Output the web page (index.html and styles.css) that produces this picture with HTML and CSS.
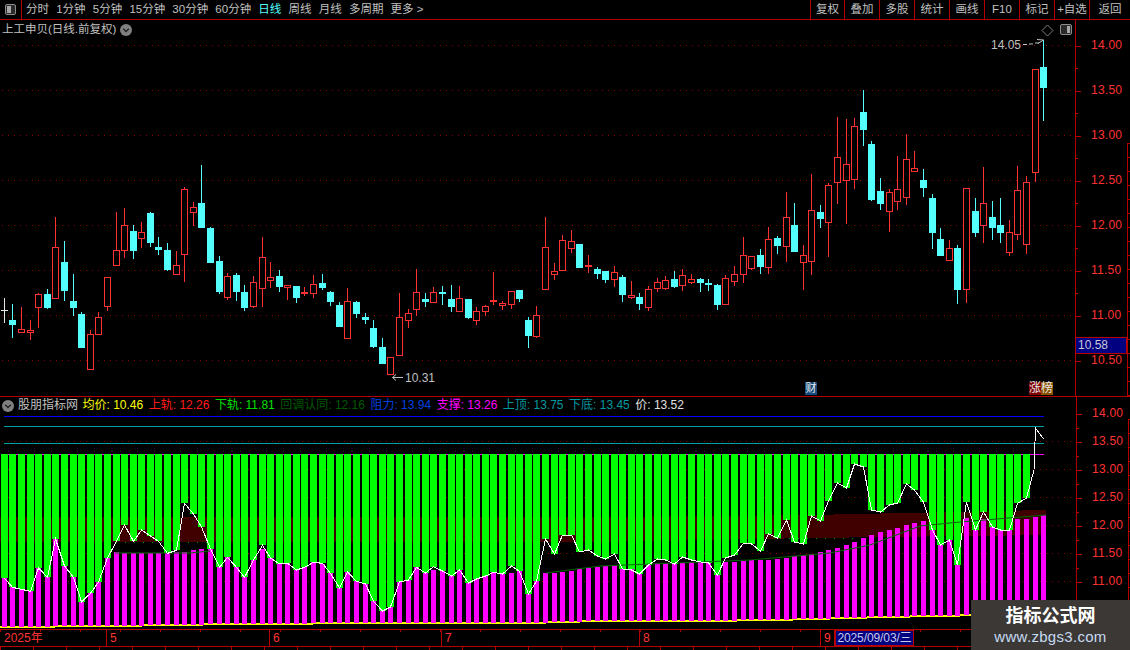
FILE: index.html
```html
<!DOCTYPE html>
<html lang="zh">
<head>
<meta charset="utf-8">
<title>上工申贝</title>
<link rel="stylesheet" href="styles.css">
</head>
<body>
<div class="app">
  <header class="toolbar">
    <div class="toolbar-toggle">
      <svg class="split-icon" width="11" height="11" viewBox="0 0 11 11"><rect x="0.5" y="0.5" width="10" height="10" rx="1.5" class="split-frame"/><rect x="2" y="2" width="4" height="7" class="split-fill"/></svg>
    </div>
    <nav class="periods">
      <span>分时</span><span>1分钟</span><span>5分钟</span><span>15分钟</span><span>30分钟</span><span>60分钟</span><span class="active">日线</span><span>周线</span><span>月线</span><span>多周期</span><span>更多 &gt;</span>
    </nav>
    <nav class="actions">
      <span>复权</span><span>叠加</span><span>多股</span><span>统计</span><span>画线</span><span>F10</span><span>标记</span><span>+自选</span><span>返回</span>
    </nav>
  </header>

  <section class="pane pane-main">
    <div class="plot">
      <svg id="candles" class="plot-svg" width="1075" height="376" viewBox="0 20 1075 376"></svg>
      <div class="plot-title">
        <span>上工申贝(日线.前复权)</span>
        <svg class="chevron" width="12" height="12" viewBox="0 0 12 12"><circle cx="6" cy="6" r="6"/><path d="M3.2 4.8 6 7.6 8.8 4.8"/></svg>
      </div>
      <svg class="mark-diamond" width="13" height="13" viewBox="0 0 13 13"><path d="M6.5 1 12 6.5 6.5 12 1 6.5Z"/></svg>
      <svg class="mark-split" width="12" height="11" viewBox="0 0 12 11"><rect x="0.5" y="0.5" width="11" height="10" rx="1.5" class="split-frame"/><rect x="7" y="2" width="3" height="7" class="split-fill"/></svg>
      <div class="price-note note-high">14.05</div>
      <div class="price-note note-low">10.31</div>
      <div class="badge badge-cai">财</div>
      <div class="badge-pair"><span class="bp-red">涨</span><span class="bp-brown">榜</span></div>
    </div>
    <aside class="axis axis-main">
      <div class="axis-labels">
        <div class="tick">14.00</div><div class="tick">13.50</div><div class="tick">13.00</div><div class="tick">12.50</div><div class="tick">12.00</div><div class="tick">11.50</div><div class="tick">11.00</div><div class="tick">10.50</div>
      </div>
      <div class="axis-edge edge-main"></div>
      <div class="last-price">10.58</div>
    </aside>
  </section>

  <section class="pane pane-sub">
    <div class="plot">
      <svg id="bars" class="plot-svg" width="1076" height="232" viewBox="0 397 1076 232"></svg>
      <div class="legend">
        <svg class="chevron" width="12" height="12" viewBox="0 0 12 12"><circle cx="6" cy="6" r="6"/><path d="M3.2 4.8 6 7.6 8.8 4.8"/></svg>
        <span class="legend-name">股朋指标网</span>
        <span class="c-yellow">均价: 10.46</span>
        <span class="c-red">上轨: 12.26</span>
        <span class="c-green">下轨: 11.81</span>
        <span class="c-dkgreen">回调认同: 12.16</span>
        <span class="c-blue">阻力: 13.94</span>
        <span class="c-magenta">支撑: 13.26</span>
        <span class="c-teal">上顶: 13.75</span>
        <span class="c-teal">下底: 13.45</span>
        <span class="c-white">价: 13.52</span>
      </div>
    </div>
    <aside class="axis axis-sub">
      <div class="axis-labels">
        <div class="tick">14.00</div><div class="tick">13.50</div><div class="tick">13.00</div><div class="tick">12.50</div><div class="tick">12.00</div><div class="tick">11.50</div><div class="tick">11.00</div>
      </div>
      <div class="axis-edge edge-sub"></div>
    </aside>
  </section>

  <footer class="timeline">
    <div class="months">
      <span class="month m-year">2025年</span>
      <span class="month m-5">5</span>
      <span class="month m-6">6</span>
      <span class="month m-7">7</span>
      <span class="month m-8">8</span>
      <span class="month m-9">9</span>
      <span class="cursor-date">2025/09/03/三</span>
    </div>
    <div class="timeline-foot"></div>
  </footer>

  <aside class="watermark">
    <div class="wm-title">指标公式网</div>
    <div class="wm-url">www.zbgs3.com</div>
  </aside>
</div>
<script src="chart.js"></script>
</body>
</html>
```

FILE: styles.css
```css
* { box-sizing: border-box; }
html, body { margin: 0; padding: 0; background: #000; }
body {
  width: 1130px;
  height: 650px;
  overflow: hidden;
  font-family: "Liberation Sans", "Noto Sans CJK SC", sans-serif;
  font-size: 12px;
  color: #c0c0c0;
}
.app { position: relative; width: 1130px; height: 650px; display: flex; flex-direction: column; }

/* toolbar */
.toolbar {
  height: 20px;
  display: flex;
  align-items: stretch;
  border-bottom: 1px solid #b40000;
  font-size: 11.5px;
  line-height: 19px;
  flex: none;
}
.toolbar-toggle {
  width: 22px;
  border-right: 1px solid #b40000;
  display: flex;
  align-items: center;
  justify-content: center;
  flex: none;
}
.split-frame { fill: #2a2a2a; stroke: #8c8c8c; }
.split-fill { fill: #a8a8a8; }
.periods { display: flex; gap: 7.2px; padding-left: 4px; }
.periods .active { color: #54ffff; }
.actions { display: flex; margin-left: auto; }
.actions span {
  width: 35px;
  border-left: 1px solid #b40000;
  text-align: center;
}
.actions span:first-child { width: 34px; }
.actions span:last-child { width: 41px; }

/* panes */
.pane { display: flex; flex: none; border-bottom: 1px solid #b40000; }
.pane-main { height: 377px; }
.pane-sub { height: 233px; }
.plot { position: relative; flex: none; }
.pane-main .plot { width: 1075px; }
.pane-sub .plot { width: 1076px; }
.plot-svg { display: block; }

.plot-title {
  position: absolute;
  left: 2px;
  top: 1px;
  display: flex;
  align-items: center;
  gap: 4px;
  font-size: 11.5px;
  line-height: 17px;
}
.chevron circle { fill: #808080; }
.chevron path { fill: none; stroke: #222; stroke-width: 1.4; }
.mark-diamond { position: absolute; left: 1041px; top: 4px; }
.mark-diamond path { fill: none; stroke: #808080; }
.mark-split { position: absolute; left: 1060px; top: 4px; }
.price-note { position: absolute; line-height: 14px; color: #c0c0c0; }
.note-high { left: 991px; top: 18px; }
.note-low { left: 405px; top: 351px; }
.badge {
  position: absolute;
  left: 805px;
  top: 362px;
  width: 12px;
  height: 13px;
  background: #174a7c;
  color: #e8e8e8;
  font-size: 11px;
  line-height: 13px;
  text-align: center;
}
.badge-pair {
  position: absolute;
  left: 1029px;
  top: 362px;
  display: flex;
  color: #e8e8e8;
  font-size: 12px;
  line-height: 13px;
}
.bp-red { background: #800000; }
.bp-brown { background: #8a5200; }

/* axes */
.axis {
  position: relative;
  flex: 1;
  display: flex;
  border-left: 1px solid #b40000;
  color: #ff3232;
  font-size: 12px;
}
.axis-labels { width: 51px; flex: none; }
.axis-main .axis-labels { padding-top: 3px; }
.axis-sub .axis-labels { padding-top: 3px; }
.tick {
  position: relative;
  padding-left: 15px;
  letter-spacing: 0.02em;
}
.axis-main .tick { height: 45px; line-height: 45px; }
.axis-sub .tick { height: 28px; line-height: 27px; }
.tick::before {
  content: "";
  position: absolute;
  left: 0;
  top: 50%;
  width: 5px;
  height: 1px;
  background: #c00000;
}
.tick::after {
  content: "";
  position: absolute;
  left: 0;
  top: 0;
  width: 2px;
  height: 1px;
  background: #c00000;
}
.tick:first-child::after { display: none; }
.axis-edge {
  flex: 1;
  border-left: 1px solid #b40000;
  background: repeating-linear-gradient(to bottom, #b40000 0, #b40000 1px, transparent 1px, transparent 14px);
}
.edge-main { margin-top: 123px; }
.edge-sub { margin-top: 22px; }
.last-price {
  position: absolute;
  left: -1px;
  top: 317px;
  width: 52px;
  height: 17px;
  padding-left: 2px;
  border: 1px solid #b40000;
  background: #000080;
  color: #c8c8d8;
  line-height: 15px;
}

/* legend colours */
.legend {
  position: absolute;
  left: 2px;
  top: 0;
  display: flex;
  align-items: center;
  gap: 5.5px;
  line-height: 17px;
  white-space: nowrap;
}
.legend-name { margin-left: -1.5px; margin-right: -1px; }
.c-yellow { color: #ffff00; }
.c-red { color: #ff1a1a; }
.c-green { color: #00e000; }
.c-dkgreen { color: #005a00; }
.c-blue { color: #0040e0; }
.c-magenta { color: #ff00ff; }
.c-teal { color: #009aa0; }
.c-white { color: #e0e0e0; }

/* timeline */
.timeline { flex: 1; display: flex; flex-direction: column; }
.months {
  height: 17px;
  display: flex;
  border-bottom: 1px solid #b40000;
  color: #ff3232;
  line-height: 17px;
  background: repeating-linear-gradient(to right, #b40000 0, #b40000 1px, transparent 1px, transparent 40px) left top / 100% 2px no-repeat;
}
.month { padding-left: 3px; border-right: 1px solid #b40000; flex: none; }
.m-year { width: 107px; padding-left: 4px; }
.m-5 { width: 163px; }
.m-6 { width: 172px; }
.m-7 { width: 198px; }
.m-8 { width: 181px; }
.m-9 { width: 14px; }
.cursor-date {
  width: 79px;
  border: 1px solid #b40000;
  background: #000080;
  color: #c8c8e8;
  text-align: center;
  line-height: 15px;
  letter-spacing: -0.1px;
  white-space: nowrap;
  flex: none;
}
.timeline-foot {
  flex: 1;
  background: repeating-linear-gradient(to right, #b40000 0, #b40000 1px, transparent 1px, transparent 33px);
}

/* watermark */
.watermark {
  position: absolute;
  left: 971px;
  top: 600px;
  width: 159px;
  height: 50px;
  background: #3c3836;
  display: flex;
  flex-direction: column;
  align-items: center;
  justify-content: center;
}
.wm-title { color: #fff; font-size: 18px; font-weight: 700; line-height: 24px; }
.wm-url { color: #c6dcf2; font-size: 15px; line-height: 18px; font-weight: 400; letter-spacing: 0.3px; }
```

FILE: chart.js
```js
var NS = "http://www.w3.org/2000/svg";
function el(parent, tag, attrs) {
  var n = document.createElementNS(NS, tag);
  for (var k in attrs) n.setAttribute(k, attrs[k]);
  parent.appendChild(n);
  return n;
}
function cxOf(i) { return Math.floor(4.33 + 8.59 * i); }

var RED = "#ff3232", CYAN = "#54ffff", WHITE = "#e8e8e8", GRID = "#8c0000";

/* [kind, high, bodyTop, bodyBottom, low], read as 3x offsets from the section's top y. kind: 0 red, 1 cyan, 2 white */
var sections = [
  [180, [[2,354,391,391,428],[1,373,420,435,473],[0,381,448,460,460],[0,420,451,460,480],[0,340,343,383,444],[1,327,342,384,387],[0,111,202,356,356],[1,183,246,333,363],[1,282,363,384,408],[1,396,402,504,504],[0,450,463,569,569],[0,396,412,464,464],[0,292,292,380,393],[0,96,211,257,257],[0,84,136,212,234],[1,136,153,213,237],[0,126,157,176,204],[1,96,99,189,201],[1,171,201,210,225],[1,189,210,270,273],[0,213,256,284,284],[0,21,28,224,306],[0,66,82,98,137],[1,-45,69,144,144],[1,141,144,249,249],[1,228,243,336,342],[0,279,289,353,360],[1,279,285,336,363],[1,315,336,384,393],[0,288,307,380,384],[0,171,232,326,381],[0,246,292,302,324],[1,270,288,321,336],[0,316,316,323,360],[1,318,318,354,369]]],
  [200, [[0,261,276,282,288],[0,225,253,281,294],[1,222,249,264,270],[1,273,276,306,318],[1,306,315,381,381],[0,264,304,416,416],[1,303,306,342,354],[1,339,351,360,372],[1,360,384,441,444],[1,414,441,492,492],[0,471,472,525,525],[0,279,352,467,467],[0,327,340,362,384],[0,207,277,329,348],[1,279,297,306,321],[0,261,277,308,308],[1,258,276,282,315],[1,255,297,321,336],[0,258,295,335,335],[1,297,297,354,357],[0,321,334,362,375],[0,315,319,335,348],[0,216,300,306,315],[0,303,310,317,330],[0,274,274,314,327],[1,270,270,297,306],[1,351,360,408,444],[0,318,346,410,414],[0,51,142,269,269],[0,189,214,224,240],[0,105,121,212,212],[0,90,124,146,159],[1,132,132,204,204],[0,165,195,201,219],[1,201,207,222,237]]],
  [80, [[1,573,573,600,609],[0,558,577,599,621],[1,585,591,645,666],[0,603,646,653,657],[1,639,651,672,690],[0,618,628,683,693],[0,594,607,626,636],[0,588,601,627,630],[1,573,597,621,624],[0,567,586,617,633],[0,582,598,608,612],[1,594,597,609,636],[1,597,609,615,633],[1,612,615,675,690],[0,585,595,674,674],[0,558,583,605,618],[0,471,526,584,609],[0,529,529,566,570],[1,507,525,561,582],[0,441,478,563,582],[1,468,474,498,522],[0,336,412,500,546],[1,369,435,516,516],[0,495,526,548,630],[0,282,391,545,585],[1,375,396,417,444],[0,309,316,428,531],[0,111,232,308,372],[0,117,253,302,432],[0,114,139,299,327],[1,30,96,150,198],[1,183,192,360,363],[1,294,333,372,390],[0,327,337,395,456],[0,228,328,365,390]]],
  [100, [[0,102,178,295,315],[0,153,205,215,216],[1,207,240,264,291],[1,282,294,399,447],[1,384,417,468,468],[0,420,445,482,482],[1,435,444,570,612],[0,265,265,569,609],[1,294,333,399,411],[0,201,310,377,429],[1,303,351,384,420],[1,294,375,399,429],[0,360,397,458,468],[0,198,271,404,420],[0,228,247,434,462],[0,-93,-93,219,245],[1,-180,-99,-36,63]]]
];

function drawCandles() {
  var svg = document.getElementById("candles");
  var i = 0;
  [45, 90, 135, 180, 225, 270, 315, 360].forEach(function (gy) {
    el(svg, "line", { x1: 2, x2: 1075, y1: gy + 0.5, y2: gy + 0.5, stroke: GRID, "stroke-dasharray": "1 5" });
  });
  sections.forEach(function (sec) {
    sec[1].forEach(function (c) {
      var off = sec[0], cx = cxOf(i++);
      var hi = Math.round(off + c[1] / 3), top = Math.round(off + c[2] / 3), bot = Math.round(off + c[3] / 3), lo = Math.round(off + c[4] / 3);
      var col = c[0] === 1 ? CYAN : c[0] === 2 ? WHITE : RED;
      var g = el(svg, "g", { "shape-rendering": "crispEdges" });
      if (top > hi) el(g, "rect", { x: cx, y: hi, width: 1, height: top - hi, fill: col });
      if (lo > bot) el(g, "rect", { x: cx, y: bot, width: 1, height: lo - bot, fill: col });
      if (c[0] === 1) {
        el(g, "rect", { x: cx - 3, y: top, width: 7, height: Math.max(bot - top, 1), fill: col });
      } else if (c[0] === 2) {
        el(g, "rect", { x: cx - 3, y: top, width: 7, height: 1, fill: col });
        el(g, "rect", { x: cx, y: hi, width: 1, height: lo - hi, fill: col });
      } else {
        el(g, "rect", { x: cx - 2.5, y: top + 0.5, width: 6, height: Math.max(bot - top - 1, 1), fill: "#000", stroke: col });
      }
    });
  });
  /* high and low arrows */
  el(svg, "path", { d: "M1023 44.5H1027M1029 44H1033M1035 43H1039M1037 39.5 1043.5 40 1038 43.5", fill: "none", stroke: "#c0c0c0" });
  el(svg, "path", { d: "M403 377.5H392.5M396 374.5 392.5 377.5 396 380.5", fill: "none", stroke: "#c0c0c0" });
}

/* sub chart, read as 3x offsets from y=390 */
var G = [565,592,598,604,534,562,447,528,562,636,610,576,504,454,405,454,420,438,454,490,481,340,372,411,477,532,502,532,562,510,466,504,522,520,540,532,517,520,550,594,546,574,582,634,
  663,651,576,570,532,549,530,543,558,540,579,567,558,547,552,528,544,612,573,447,492,435,435,486,480,498,507,492,537,540,552,525,507,510,522,501,510,516,519,555,504,495,460,462,
  483,432,444,390,456,462,378,393,333,279,294,222,231,360,366,345,339,282,300,336,420,465,450,525,336,420,366,411,420,420,340,324];
var M = [565,592,598,604,534,562,447,528,562,636,610,576,504,486,490,490,490,490,490,490,486,486,481,477,477,532,502,532,562,510,477,504,522,520,540,532,517,522,550,594,546,574,582,634,
  663,651,576,570,532,549,540,543,558,540,579,567,558,547,552,549,544,612,573,549,549,546,543,537,534,531,528,525,537,537,552,525,519,519,522,519,516,516,519,555,516,516,513,510,
  510,510,507,504,498,495,492,486,480,474,465,456,444,435,426,420,414,405,399,393,420,465,450,525,384,420,387,411,420,420,387,387,381,375];
var YSTEPS = [[0,55,626],[55,142,625],[142,203,624],[203,313,623],[313,546,622],[546,580,621],[580,737,620],[737,793,619],[793,830,618],[830,867,617],[867,910,616],[910,960,615],[960,1048,614]];

function yAt(x) {
  for (var s = 0; s < YSTEPS.length; s++) if (x < YSTEPS[s][1]) return YSTEPS[s][2];
  return 614;
}

function drawBars() {
  var svg = document.getElementById("bars");
  var crisp = el(svg, "g", { "shape-rendering": "crispEdges" });
  [441, 469, 497, 525, 553, 581].forEach(function (gy) {
    el(crisp, "line", { x1: 2, x2: 1076, y1: gy + 0.5, y2: gy + 0.5, stroke: GRID, "stroke-dasharray": "1 5" });
  });
  el(crisp, "rect", { x: 4, y: 416, width: 1040, height: 1, fill: "#0000ff" });
  el(crisp, "rect", { x: 4, y: 426, width: 1040, height: 1, fill: "#00a0a0" });
  el(crisp, "rect", { x: 4, y: 443, width: 1040, height: 1, fill: "#00a0a0" });
  el(crisp, "rect", { x: 1, y: 454, width: 1043, height: 1, fill: "#ff00ff" });
  /* dark red band between the rails */
  el(crisp, "polygon", { points: "0,517 600,517 810,515 1046,510 1046,535 810,538 600,542 0,542", fill: "#400000" });
  /* yellow base line */
  YSTEPS.forEach(function (s) {
    el(crisp, "rect", { x: s[0], y: s[2], width: s[1] - s[0], height: 2, fill: "#ffff00" });
  });
  el(svg, "polyline", { points: "115,553 190,553 210,551", fill: "none", stroke: "#006400" });
  el(svg, "polyline", { points: "546,573 600,566 750,560 830,553 870,545 920,526 960,522 1046,515", fill: "none", stroke: "#006400" });
  /* bars */
  var i, cx, mtop, gbot, bottom;
  for (i = 0; i < 122; i++) {
    cx = cxOf(i);
    if (G[i] !== undefined) {
      gbot = Math.round(390 + G[i] / 3);
      el(crisp, "rect", { x: cx - 3, y: 454, width: 7, height: gbot - 454, fill: "#00ff00" });
    }
    mtop = Math.round(390 + M[i] / 3);
    bottom = yAt(cx) + 1;
    el(crisp, "rect", { x: cx - 2, y: mtop, width: 5, height: bottom - mtop, fill: "#ff00ff" });
  }
  /* lower-rail dots */
  el(crisp, "line", { x1: 116, x2: 212, y1: 542.5, y2: 542.5, stroke: "#00c000", "stroke-dasharray": "1 8", opacity: 0.8 });
  el(crisp, "line", { x1: 780, x2: 860, y1: 538.5, y2: 538.5, stroke: "#00c000", "stroke-dasharray": "1 8", opacity: 0.8 });
  /* white price line */
  var pts = [];
  for (i = 0; i < 120; i++) pts.push(cxOf(i) + 0.5 + "," + (390 + G[i] / 3));
  pts.push(cxOf(119) + 8 + "," + 470, cxOf(120) + 0.5 + "," + 428, cxOf(121) + 0.5 + "," + 439);
  el(svg, "polyline", { points: pts.join(" "), fill: "none", stroke: "#ffffff", "stroke-width": 1, "shape-rendering": "crispEdges" });
}

drawCandles();
drawBars();
```
